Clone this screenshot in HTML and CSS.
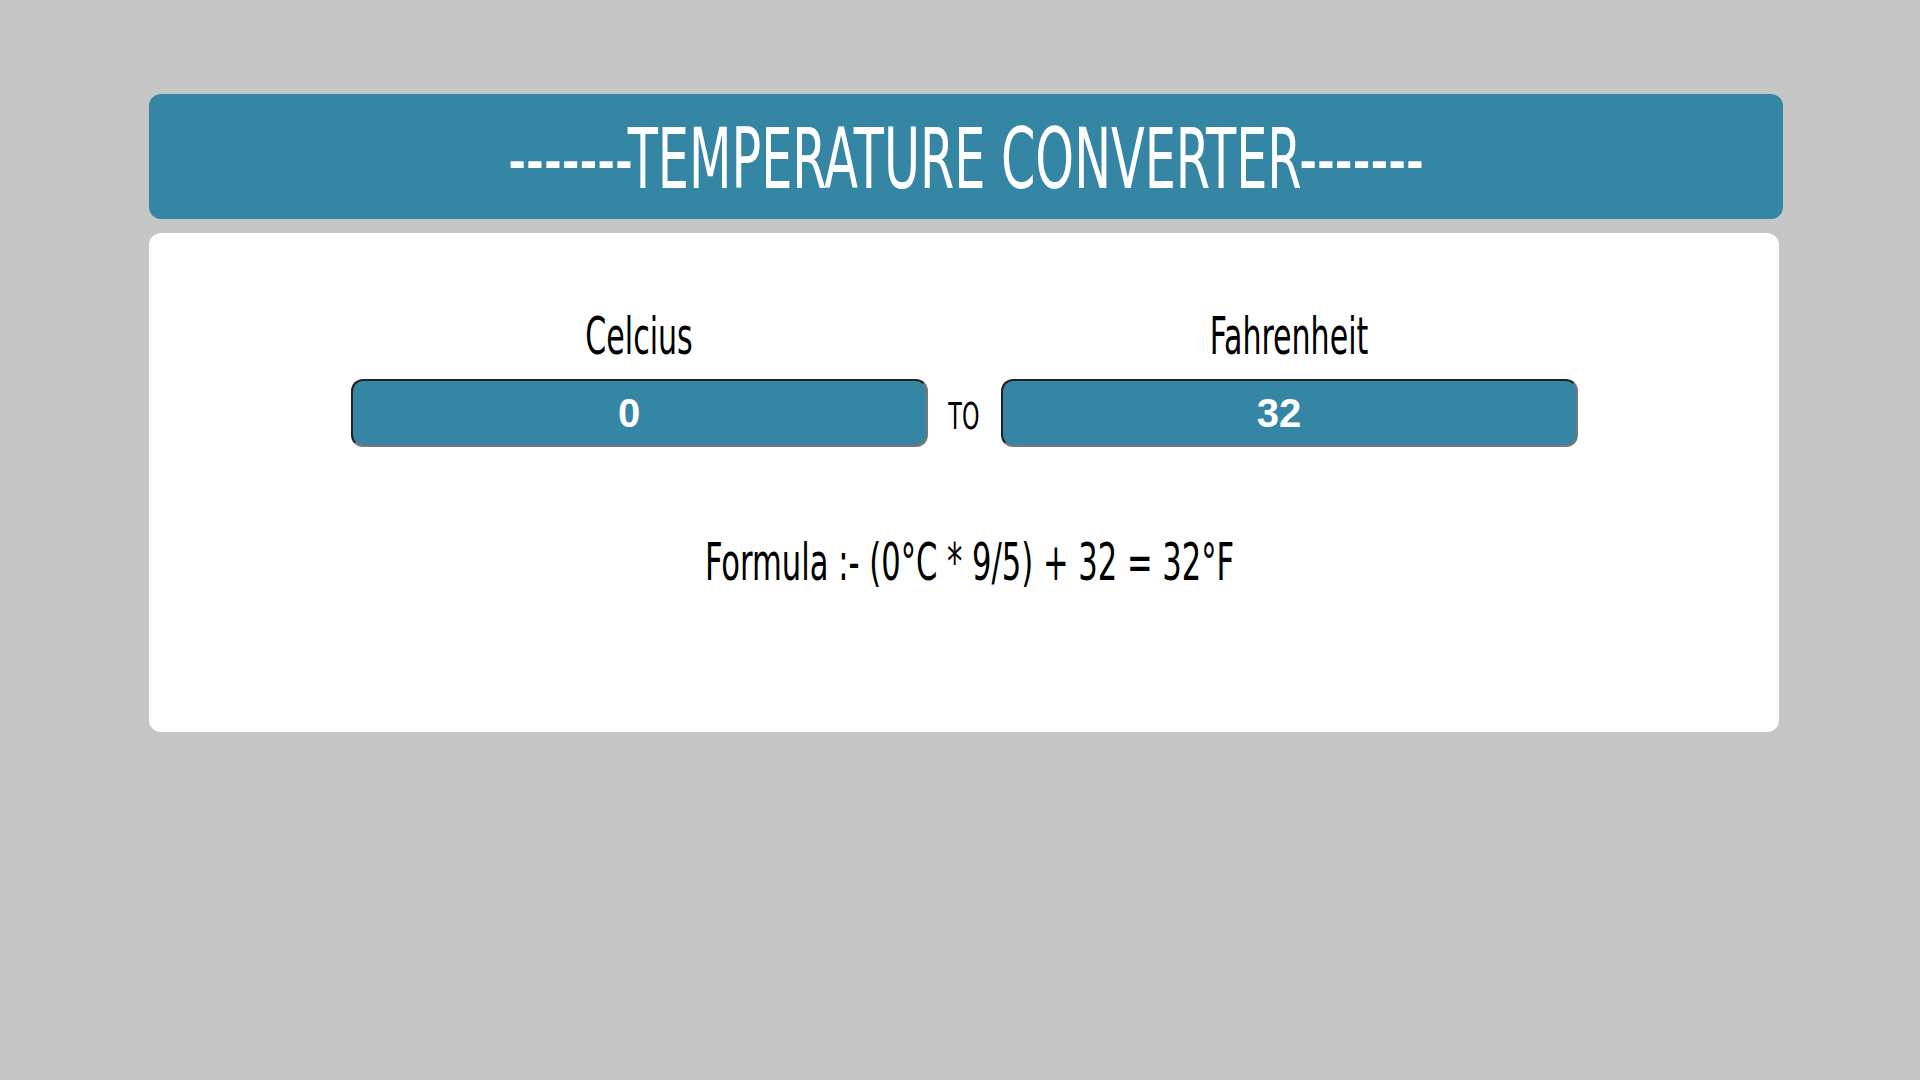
FILE: index.html
```html
<!DOCTYPE html>
<html lang="en">
<head>
<meta charset="utf-8">
<title>Temperature Converter</title>
<link rel="stylesheet" href="styles.css">
</head>
<body>
<div class="wrap">
  <header class="head">
    <h1 class="title"><span class="squeeze">-------TEMPERATURE CONVERTER-------</span></h1>
  </header>
  <main class="card">
    <div class="row">
      <div class="col">
        <label class="label" for="c"><span class="squeeze">Celcius</span></label>
        <input class="field" id="c" type="text" value="0">
      </div>
      <div class="to"><span class="squeeze">TO</span></div>
      <div class="col">
        <label class="label" for="f"><span class="squeeze">Fahrenheit</span></label>
        <input class="field" id="f" type="text" value="32">
      </div>
    </div>
    <p class="formula"><span class="squeeze">Formula :- (0°C * 9/5) + 32 = 32°F</span></p>
  </main>
</div>
</body>
</html>
```
FILE: styles.css
```css
* { box-sizing: border-box; }
html, body { margin: 0; padding: 0; }
body {
  background: #c6c6c6;
  font-family: "Liberation Sans Narrow", "DejaVu Sans Condensed", "Liberation Sans", sans-serif;
  color: #000;
  height: 1080px;
}
.wrap {
  margin: 94px 0 0 149px;
  width: 1634px;
}
.squeeze {
  display: inline-block;
  transform: scaleX(0.69);
  transform-origin: center;
  white-space: nowrap;
}
.head {
  background: #3586a4;
  border-radius: 12px;
  height: 125px;
  display: flex;
  align-items: center;
  justify-content: center;
}
.title {
  margin: 0;
  color: #fff;
  font-weight: 400;
  font-size: 84px;
  line-height: 1;
  padding-top: 4px;
}
.title .squeeze { transform: scaleX(0.652); }
.card {
  margin-top: 14px;
  width: 1630px;
  height: 499px;
  background: #fff;
  border-radius: 12px;
  padding-top: 75px;
}
.row {
  display: flex;
  justify-content: center;
  align-items: flex-end;
  gap: 21px;
}
.col {
  display: flex;
  flex-direction: column;
  align-items: center;
  width: 577px;
}
.label {
  font-size: 51px;
  line-height: 58px;
  margin-bottom: 13px;
}
.label .squeeze { transform: scaleX(0.655); }
.field {
  width: 577px;
  height: 68px;
  background: #3586a4;
  color: #fff;
  border-style: solid;
  border-width: 2px;
  border-color: #222 #777 #777 #222;
  border-radius: 12px;
  font-family: "Liberation Sans", Arial, sans-serif;
  font-weight: 700;
  font-size: 40px;
  text-align: center;
  padding: 0 20px 0 0;
  outline: none;
}
.to {
  width: 31px;
  height: 68px;
  display: flex;
  align-items: center;
  justify-content: center;
  font-size: 38px;
  padding-top: 6px;
}
.to .squeeze { transform: scaleX(0.65); }
.formula {
  margin: 86px 0 0;
  padding-left: 11px;
  text-align: center;
  font-size: 52px;
  line-height: 58px;
}
.formula .squeeze { transform: scaleX(0.654); }
```
